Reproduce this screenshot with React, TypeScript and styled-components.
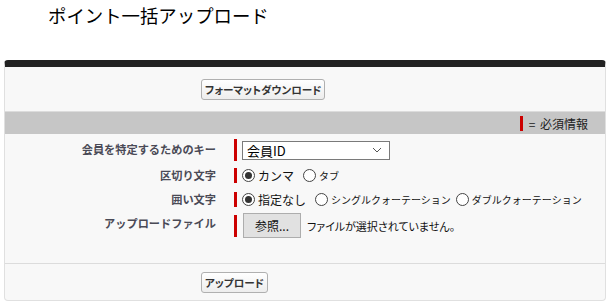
import styled, { createGlobalStyle } from 'styled-components';

const GlobalStyle = createGlobalStyle`
    body {
        margin: 0;
        background: #fff;
        font-family: "Noto Sans CJK JP", "Noto Sans", sans-serif;
        color: #000;
    }
`;

const App = () => {
    return (
        <>
            <GlobalStyle />
            <Title>ポイント一括アップロード</Title>
            <Panel>
                <ButtonBar>
                    <Button type="button">フォーマットダウンロード</Button>
                </ButtonBar>
                <SectionBar>
                    <RequiredMark />
                    <Legend>= 必須情報</Legend>
                </SectionBar>
                <FormBody>
                    <Row>
                        <Label>会員を特定するためのキー</Label>
                        <Field>
                            <RequiredMark $tall />
                            <FakeSelect>
                                <span>会員ID</span>
                                <svg width="10" height="6" viewBox="0 0 10 6">
                                    <path d="M1 1 L5 5 L9 1" fill="none" stroke="#555" strokeWidth="1" />
                                </svg>
                            </FakeSelect>
                        </Field>
                    </Row>
                    <Row>
                        <Label>区切り文字</Label>
                        <Field>
                            <RequiredMark />
                            <Option><Radio type="radio" name="sep" defaultChecked />カンマ</Option>
                            <Option $small><Radio type="radio" name="sep" />タブ</Option>
                        </Field>
                    </Row>
                    <Row>
                        <Label>囲い文字</Label>
                        <Field>
                            <RequiredMark />
                            <Option><Radio type="radio" name="quote" defaultChecked />指定なし</Option>
                            <Option $small><Radio type="radio" name="quote" />シングルクォーテーション</Option>
                            <Option $small><Radio type="radio" name="quote" />ダブルクォーテーション</Option>
                        </Field>
                    </Row>
                    <Row>
                        <Label>アップロードファイル</Label>
                        <Field>
                            <RequiredMark $tall />
                            <BrowseButton type="button">参照...</BrowseButton>
                            <FileText>ファイルが選択されていません。</FileText>
                        </Field>
                    </Row>
                </FormBody>
                <ButtonBar $bottom>
                    <Button type="button">アップロード</Button>
                </ButtonBar>
            </Panel>
        </>
    );
};

export default App;

const Title = styled.h1`
    margin: 0;
    height: 60px;
    box-sizing: border-box;
    padding: 2px 0 0 48px;
    font-size: 18.4px;
    font-weight: normal;
    line-height: 26px;
`

const Panel = styled.div`
    width: 602px;
    margin-left: 4px;
    box-sizing: border-box;
    background: #f8f8f8;
    border: 1px solid #e0e0e0;
    border-top: 7px solid #222;
    border-radius: 4px;
`

const ButtonBar = styled.div<{ $bottom?: boolean }>`
    display: flex;
    align-items: center;
    height: ${p => (p.$bottom ? '36px' : '44px')};
    padding-left: 196px;
    border-bottom: ${p => (p.$bottom ? 'none' : '1px solid #dcdcdc')};
    border-top: ${p => (p.$bottom ? '1px solid #dcdcdc' : 'none')};
`

const Button = styled.button`
    height: 21px;
    padding: 0 3px;
    border: 1px solid #b0b0b0;
    border-radius: 3px;
    background: linear-gradient(#ffffff, #ededed);
    font-family: "Noto Sans CJK JP", sans-serif;
    font-feature-settings: "palt";
    font-size: 10.6px;
    font-weight: bold;
    color: #333;
`

const SectionBar = styled.div`
    display: flex;
    align-items: center;
    justify-content: flex-end;
    height: 22px;
    padding-right: 17px;
    background: #c6c6c6;
    gap: 6px;
`

const RequiredMark = styled.span<{ $tall?: boolean }>`
    display: inline-block;
    flex: none;
    width: 3px;
    height: ${p => (p.$tall ? '22px' : '15px')};
    background: #c00;
`

const Legend = styled.span`
    font-size: 12px;
    color: #222;
    word-spacing: 2px;
`

const FormBody = styled.div`
    display: flex;
    flex-direction: column;
    gap: 4px;
    padding: 5px 0 25px;
`

const Row = styled.div`
    display: grid;
    grid-template-columns: 211px 1fr;
    column-gap: 18px;
    align-items: start;
`

const Label = styled.div`
    text-align: right;
    font-size: 11.2px;
    font-weight: bold;
    color: #4a4a56;
    line-height: 20px;
`

const Field = styled.div`
    display: flex;
    align-items: center;
    min-height: 20px;
`

const FakeSelect = styled.div`
    display: flex;
    align-items: center;
    justify-content: space-between;
    width: 148px;
    height: 19px;
    margin-left: 5px;
    box-sizing: border-box;
    padding: 0 7px 0 4px;
    background: #fff;
    border: 1px solid #7a7a7a;
    font-size: 13px;
`

const Option = styled.label<{ $small?: boolean }>`
    display: flex;
    align-items: center;
    margin-left: 5px;
    margin-right: ${p => (p.$small ? '0' : '4px')};
    font-size: ${p => (p.$small ? '10px' : '12px')};
    color: #111;
`

const Radio = styled.input`
    appearance: none;
    width: 13px;
    height: 13px;
    margin: 0 3px 0 0;
    border: 1px solid #444;
    border-radius: 50%;
    background: #fff;
    display: grid;
    place-items: center;

    &:checked::after {
        content: '';
        width: 7px;
        height: 7px;
        border-radius: 50%;
        background: #333;
    }
`

const BrowseButton = styled.button`
    height: 25px;
    width: 58px;
    margin-left: 6px;
    border: 1px solid #adadad;
    background: #e1e1e1;
    font-family: "Noto Sans CJK JP", sans-serif;
    font-size: 12px;
    color: #111;
`

const FileText = styled.span`
    margin-left: 6px;
    font-size: 11px;
    font-feature-settings: "palt";
    color: #111;
`
